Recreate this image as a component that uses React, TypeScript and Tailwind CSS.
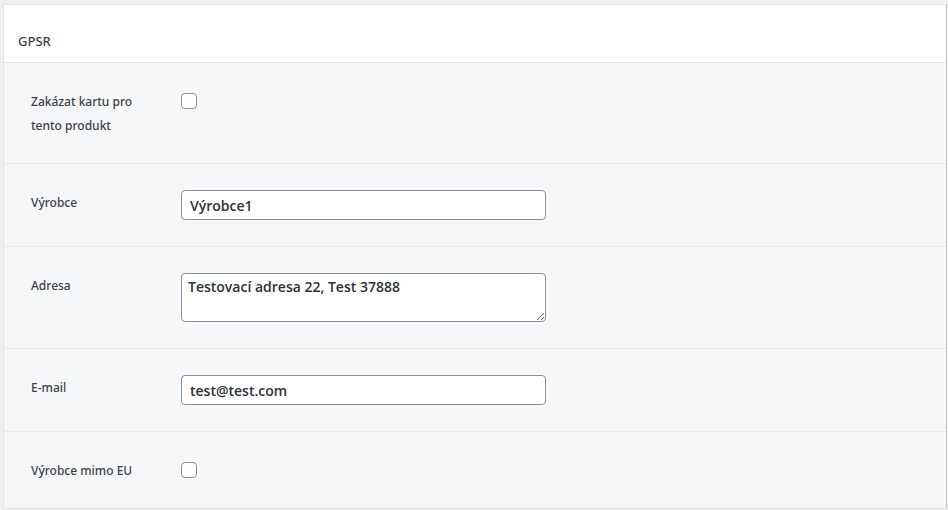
import React from "react";

function Row({ label, children, last }: { label: React.ReactNode; children: React.ReactNode; last?: boolean }) {
  return (
    <div className={last ? "flex px-[27px] py-[26px]" : "flex px-[27px] py-[26px] border-b border-[#ebebeb]"}>
      <div className="w-[150px] shrink-0 translate-y-[1px] font-['Noto_Sans','Open_Sans',sans-serif] text-[12px] leading-[24px] font-medium text-[#3c434a]">
        {label}
      </div>
      <div className="flex-1">{children}</div>
    </div>
  );
}

function Checkbox() {
  return <div className="mt-1 w-4 h-4 rounded-[4px] border border-[#8c8f94] bg-white" />;
}

const fieldCls =
  "w-[365px] rounded-[4px] border border-[#8c8f94] bg-white text-[14px] font-semibold text-[#2c3338] outline-none";

export default function App() {
  return (
    <div className="w-[948px] h-[510px] bg-[#f0f0f1] pt-1 overflow-hidden font-['Open_Sans','Noto_Sans',sans-serif]">
      <div className="ml-[3px] w-[944px] border border-[#e2e4e7] border-r-[#c3c4c7] bg-[#f6f7f8]">
        <div className="bg-white h-[58px] flex items-end pb-[11px] pl-[14px] border-b border-[#e2e4e7]">
          <span className="font-['Noto_Sans','Open_Sans',sans-serif] text-[13px] font-medium text-[#3c434a]">GPSR</span>
        </div>
        <Row label={<>Zakázat kartu pro<br />tento produkt</>}>
          <Checkbox />
        </Row>
        <Row label="Výrobce">
          <input readOnly value="Výrobce1" className={`${fieldCls} h-[30px] px-2`} />
        </Row>
        <Row label="Adresa">
          <textarea
            readOnly
            value="Testovací adresa 22, Test 37888"
            className={`${fieldCls} block h-[49px] px-[6px] pt-[3px] leading-[20px]`}
          />
        </Row>
        <Row label="E-mail">
          <input readOnly value="test@test.com" className={`${fieldCls} h-[30px] px-2`} />
        </Row>
        <Row label="Výrobce mimo EU" last>
          <Checkbox />
        </Row>
      </div>
    </div>
  );
}
